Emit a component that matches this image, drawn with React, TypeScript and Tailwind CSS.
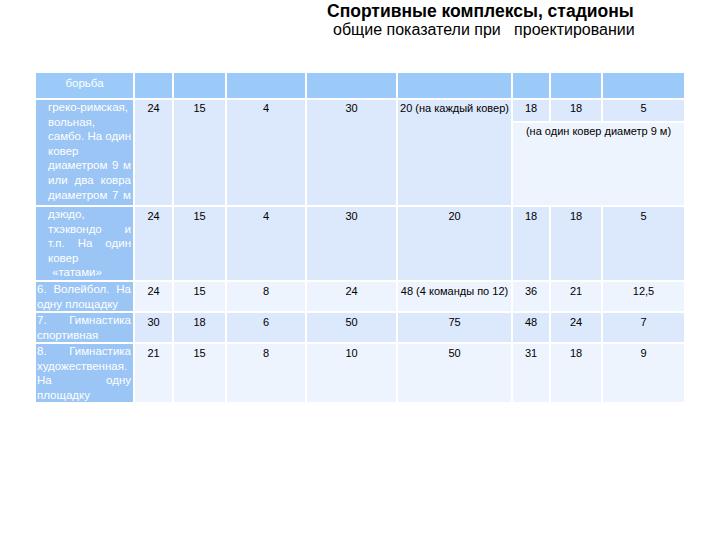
import React from "react";

type Line = { t: string; j?: boolean; cls?: string };

const HEAD = "bg-[#9ccaf8]";
const FIRST = "bg-[#9bc5f4]";
const DARK = "bg-[#dce8fb]";
const LIGHT = "bg-[#eef4fd]";

function FirstCell({ lines, pad, span }: { lines: Line[]; pad: string; span?: boolean }) {
  return (
    <div
      className={`${FIRST} ${pad} ${span ? "row-span-2" : ""} overflow-hidden text-[11.5px] leading-[14.6px] text-white`}
    >
      {lines.map((l, i) => (
        <div
          key={i}
          className={`whitespace-nowrap ${l.j ? "[text-align-last:justify] text-justify" : "text-left"} ${l.cls ?? ""}`}
        >
          {l.t}
        </div>
      ))}
    </div>
  );
}

function Num({ v, bg, span, pt = "pt-[2px]" }: { v: string; bg: string; span?: boolean; pt?: string }) {
  return (
    <div
      className={`${bg} ${span ? "row-span-2" : ""} ${pt} text-center text-[11px] leading-[14px] text-black whitespace-nowrap`}
    >
      {v}
    </div>
  );
}

export default function App() {
  const rows: { first: Line[]; pad: string; vals: string[]; bg: string }[] = [
    {
      first: [
        { t: "дзюдо," },
        { t: "тхэквондо и", j: true },
        { t: "т.п. На один", j: true },
        { t: "ковер" },
        { t: "«татами»", cls: "pl-[4px]" },
      ],
      pad: "pl-[12px] pr-[2px]",
      vals: ["24", "15", "4", "30", "20", "18", "18", "5"],
      bg: DARK,
    },
    {
      first: [{ t: "6. Волейбол. На", j: true }, { t: "одну площадку" }],
      pad: "pl-[1px] pr-[2px]",
      vals: ["24", "15", "8", "24", "48 (4 команды по 12)", "36", "21", "12,5"],
      bg: LIGHT,
    },
    {
      first: [{ t: "7. Гимнастика", j: true }, { t: "спортивная" }],
      pad: "pl-[1px] pr-[2px]",
      vals: ["30", "18", "6", "50", "75", "48", "24", "7"],
      bg: DARK,
    },
    {
      first: [
        { t: "8. Гимнастика", j: true },
        { t: "художественная." },
        { t: "На одну", j: true },
        { t: "площадку" },
      ],
      pad: "pl-[1px] pr-[2px]",
      vals: ["21", "15", "8", "10", "50", "31", "18", "9"],
      bg: LIGHT,
    },
  ];

  return (
    <div className="w-[720px] h-[540px] bg-white overflow-hidden font-['Liberation_Sans',Arial,sans-serif]">
      <div className="pt-[2px]">
        <div className="ml-[327px] text-[17.5px] leading-[18px] font-bold text-black whitespace-nowrap">
          Спортивные комплексы, стадионы
        </div>
        <div className="ml-[333px] mt-[2px] text-[16px] leading-[16px] text-black whitespace-pre">
          общие показатели при   проектировании
        </div>
      </div>

      <div className="ml-[36px] mt-[35px] w-[648px] grid grid-cols-[97px_37px_51px_78px_89px_113px_36px_50px_81px] grid-rows-[25px_21px_82px_73px_29px_29px_58px] gap-[2px]">
        {/* header */}
        <div className={`${HEAD} pt-[3px] text-center text-[11.5px] leading-[14px] text-white`}>борьба</div>
        {Array.from({ length: 8 }).map((_, i) => (
          <div key={i} className={HEAD} />
        ))}

        {/* row 1 */}
        <FirstCell
          span
          pad="pl-[12px] pr-[2px]"
          lines={[
            { t: "греко-римская," },
            { t: "вольная," },
            { t: "самбо. На один", j: true },
            { t: "ковер" },
            { t: "диаметром 9 м", j: true },
            { t: "или два ковра", j: true },
            { t: "диаметром 7 м", j: true },
          ]}
        />
        <Num v="24" bg={DARK} span pt="pt-[1px]" />
        <Num v="15" bg={DARK} span pt="pt-[1px]" />
        <Num v="4" bg={DARK} span pt="pt-[1px]" />
        <Num v="30" bg={DARK} span pt="pt-[1px]" />
        <Num v="20 (на каждый ковер)" bg={DARK} span pt="pt-[1px]" />
        <Num v="18" bg={DARK} pt="pt-[1px]" />
        <Num v="18" bg={DARK} pt="pt-[1px]" />
        <Num v="5" bg={DARK} pt="pt-[1px]" />
        <div className={`${LIGHT} col-span-3 pt-[1px] text-center text-[11px] leading-[14px] text-black whitespace-nowrap`}>
          (на один ковер диаметр 9 м)
        </div>

        {rows.map((r, ri) => (
          <React.Fragment key={ri}>
            <FirstCell lines={r.first} pad={r.pad} />
            {r.vals.map((v, vi) => (
              <Num key={vi} v={v} bg={r.bg} />
            ))}
          </React.Fragment>
        ))}
      </div>
    </div>
  );
}
